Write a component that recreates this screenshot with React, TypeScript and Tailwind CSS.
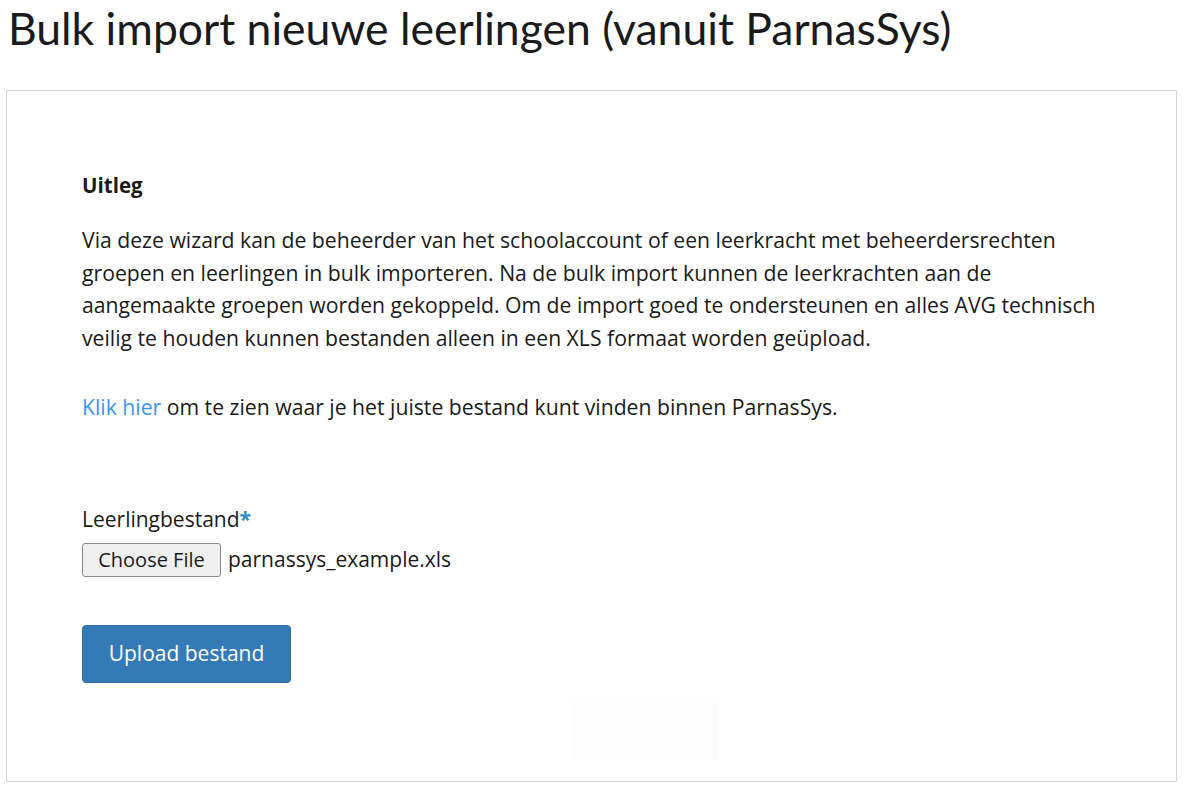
import React from "react";

export default function App() {
  return (
    <div className="min-h-screen bg-white text-[#1a1a1a] font-['Open_Sans','Noto_Sans',sans-serif]">
      <h1 className="pl-[8px] pt-[2px] font-['Lato',sans-serif] text-[44.5px] leading-[52px] font-normal">
        Bulk import nieuwe leerlingen (vanuit ParnasSys)
      </h1>

      <div className="relative mx-[6px] mt-[36px] h-[692px] w-[1171px] border border-[#d4d4d4]">
        <div className="px-[75px] pt-[80px]">
          <h2 className="text-[20.5px] leading-[28px] font-bold">Uitleg</h2>

          <p className="mt-[25px] text-[21.2px] leading-[32.7px]">
            Via deze wizard kan de beheerder van het schoolaccount of een leerkracht met beheerdersrechten
            <br />
            groepen en leerlingen in bulk importeren. Na de bulk import kunnen de leerkrachten aan de
            <br />
            aangemaakte groepen worden gekoppeld. Om de import goed te ondersteunen en alles AVG technisch
            <br />
            veilig te houden kunnen bestanden alleen in een XLS formaat worden geüpload.
          </p>

          <p className="mt-[36px] text-[21.2px] leading-[32px]">
            <a href="#" className="text-[#3a97ef]">Klik hier</a> om te zien waar je het juiste bestand kunt vinden binnen ParnasSys.
          </p>

          <div className="mt-[82px]">
            <label className="block text-[21px] leading-[28px]">
              Leerlingbestand<span className="font-bold text-[#2b8cc4]">*</span>
            </label>
            <div className="mt-[10px] flex items-center gap-[7px]">
              <span className="inline-flex h-[34px] w-[139px] items-center justify-center rounded-[3px] border border-[#8a8a8a] bg-[#efefef] text-[20px]">
                Choose File
              </span>
              <span className="text-[21px]">parnassys_example.xls</span>
            </div>
          </div>

          <button className="mt-[48px] h-[58px] w-[209px] rounded-[4px] border border-[#2e6da4] bg-[#337ab7] text-[21px] text-white">
            Upload bestand
          </button>
        </div>

        <div className="absolute left-[565px] top-[612px] h-[57px] w-[145px] bg-[#fcfcfc]" />
      </div>
    </div>
  );
}
